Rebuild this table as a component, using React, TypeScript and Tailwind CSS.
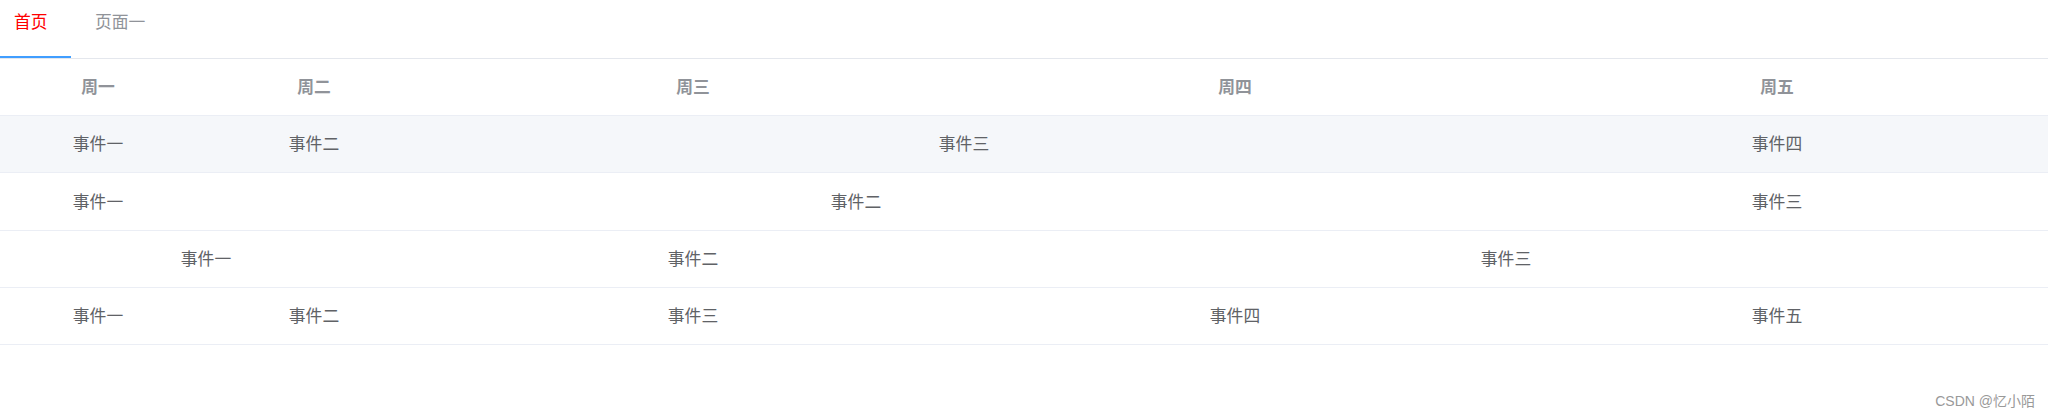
const font = "font-['Noto_Sans_CJK_SC','Microsoft_YaHei',sans-serif]";

type Cell = { text: string; span: 1 | 2 | 3 };

const header = ["周一", "周二", "周三", "周四", "周五"];

const rows: { cells: Cell[]; h: string; bg?: string }[] = [
  {
    h: "h-[56px]",
    bg: "bg-[#f5f7fa]",
    cells: [
      { text: "事件一", span: 1 },
      { text: "事件二", span: 1 },
      { text: "事件三", span: 2 },
      { text: "事件四", span: 1 },
    ],
  },
  {
    h: "h-[57px]",
    cells: [
      { text: "事件一", span: 1 },
      { text: "事件二", span: 3 },
      { text: "事件三", span: 1 },
    ],
  },
  {
    h: "h-[56px]",
    cells: [
      { text: "事件一", span: 2 },
      { text: "事件二", span: 1 },
      { text: "事件三", span: 2 },
    ],
  },
  {
    h: "h-[56px]",
    cells: [
      { text: "事件一", span: 1 },
      { text: "事件二", span: 1 },
      { text: "事件三", span: 1 },
      { text: "事件四", span: 1 },
      { text: "事件五", span: 1 },
    ],
  },
];

const spanClass = {
  1: "col-span-1",
  2: "col-span-2",
  3: "col-span-3",
};

const gridCols = "grid grid-cols-[216px_216px_542px_542px_542px] w-[2058px]";

export default function App() {
  return (
    <div className={`relative w-[2051px] h-[414px] bg-white ${font}`}>
      {/* tabs */}
      <div className="flex w-[2048px] h-[59px] border-b border-[#e4e7ed]">
        <div className="w-[71px] h-[58px] pl-[14px] pt-[12px] border-b-2 border-[#409eff] text-[16.8px] leading-[18px] text-[#ff0000]">
          首页
        </div>
        <div className="ml-[24px] pt-[12px] text-[16.8px] leading-[18px] text-[#909399]">
          页面一
        </div>
      </div>

      {/* table */}
      <div className="w-[2048px] overflow-hidden">
        <div className={`${gridCols} h-[57px] border-b border-[#ebeef5]`}>
          {header.map((h) => (
            <div
              key={h}
              className="flex items-center justify-center pr-[20px] text-[16.8px] font-bold text-[#909399]"
            >
              {h}
            </div>
          ))}
        </div>
        {rows.map((row, i) => (
          <div
            key={i}
            className={`${gridCols} ${row.h} box-content border-b border-[#ebeef5] ${row.bg ?? ""}`}
          >
            {row.cells.map((c, j) => (
              <div
                key={j}
                className={`${spanClass[c.span]} flex items-center justify-center pr-[20px] text-[16.8px] text-[#606266]`}
              >
                {c.text}
              </div>
            ))}
          </div>
        ))}
      </div>

      {/* watermark */}
      <div className="absolute right-[16px] bottom-[5px] font-['Liberation_Sans','Noto_Sans_CJK_SC',sans-serif] text-[14px] leading-[16px] text-[#999999]">
        CSDN @忆小陌
      </div>
    </div>
  );
}
